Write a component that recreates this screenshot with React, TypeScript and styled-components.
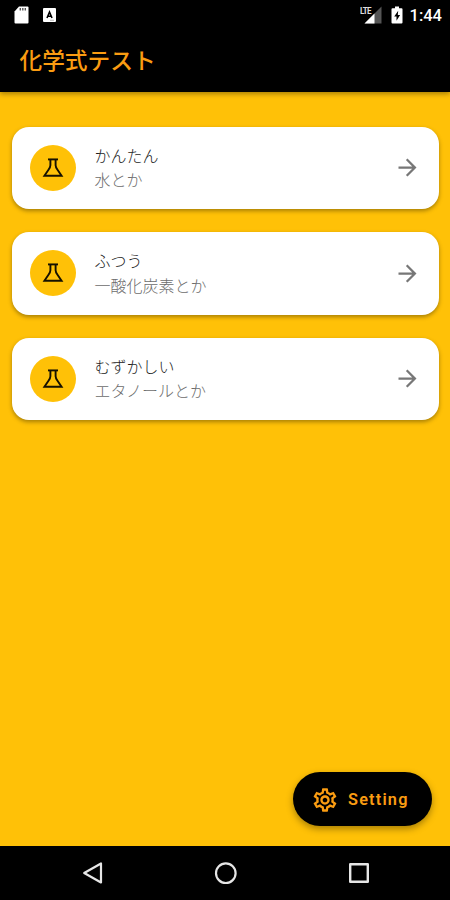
import styled, { createGlobalStyle } from 'styled-components';
import { MdArrowForward, MdOutlineSettings } from 'react-icons/md';

const AMBER = '#FFC107';
const ORANGE = '#FA9C12';

const levels = [
  { title: 'かんたん', subtitle: '水とか' },
  { title: 'ふつう', subtitle: '一酸化炭素とか' },
  { title: 'むずかしい', subtitle: 'エタノールとか' },
];

const GlobalStyle = createGlobalStyle`
  * {
    box-sizing: border-box;
  }
  body {
    margin: 0;
    background: ${AMBER};
    font-family: Roboto, 'Noto Sans CJK JP', sans-serif;
  }
  svg {
    display: block;
    flex-shrink: 0;
  }
`;

const Screen = styled.div`
  display: flex;
  flex-direction: column;
  width: 450px;
  height: 900px;
  overflow: hidden;
  background: ${AMBER};
`;

const Header = styled.header`
  z-index: 1;
  flex-shrink: 0;
  height: 92px;
  background: #000;
  box-shadow: 0 2px 5px rgba(0, 0, 0, 0.35);
`;

const StatusBar = styled.div`
  display: flex;
  align-items: center;
  justify-content: space-between;
  height: 29px;
  padding: 0 8px 0 14px;
`;

const StatusGroup = styled.div<{ $gap: number }>`
  display: flex;
  align-items: center;
  gap: ${(p) => p.$gap}px;
`;

const Clock = styled.span`
  margin-left: -2px;
  padding-top: 1px;
  color: #fff;
  font-size: 16.5px;
  font-weight: 500;
  line-height: 29px;
`;

const AppTitle = styled.h1`
  margin: 0;
  padding-left: 19.5px;
  color: ${ORANGE};
  font-size: 22.7px;
  font-weight: 500;
  line-height: 66px;
`;

const List = styled.main`
  display: flex;
  flex: 1;
  flex-direction: column;
  gap: 23px;
  padding: 34.5px 11px 0 11.5px;
`;

const Card = styled.div`
  display: flex;
  align-items: center;
  height: 82.5px;
  padding: 0 18.5px;
  border-radius: 17px;
  background: #fff;
  box-shadow: 0 2px 4px rgba(0, 0, 0, 0.35);
`;

const Avatar = styled.div`
  display: flex;
  align-items: center;
  justify-content: center;
  width: 46px;
  height: 46px;
  border-radius: 50%;
  background: ${AMBER};
`;

const CardText = styled.div`
  flex: 1;
  margin-left: 18.5px;
  padding-top: 2.5px;
  font-size: 16px;
  font-weight: 300;
  line-height: 24.5px;
`;

const CardTitle = styled.div`
  color: #1c1c1c;
`;

const CardSubtitle = styled.div`
  color: #6c6c6c;
`;

const Footer = styled.div`
  display: flex;
  justify-content: flex-end;
  padding: 0 18px 20px 0;
`;

const SettingButton = styled.button`
  display: flex;
  align-items: center;
  width: 139px;
  height: 54px;
  padding: 1px 0 0 18px;
  border: 0;
  border-radius: 27px;
  background: #000;
  box-shadow: 0 3px 7px rgba(0, 0, 0, 0.35);
  color: ${ORANGE};
  font-family: Roboto, sans-serif;
  font-size: 16.3px;
  font-weight: 600;
  letter-spacing: 1.2px;
  gap: 9px;
`;

const NavBar = styled.nav`
  display: flex;
  flex-shrink: 0;
  align-items: center;
  justify-content: space-between;
  height: 54px;
  padding: 0 77px 0 79px;
  background: #000;
`;

const SdCardIcon = () => (
  <svg width='15' height='18' viewBox='0 0 15 18'>
    <path d='M5 0.5h8.5a1 1 0 0 1 1 1v15a1 1 0 0 1-1 1h-12a1 1 0 0 1-1-1V5.5z' fill='#fff' />
    <path d='M6.3 2v2.6M8.8 2v2.6M11.3 2v2.6' stroke='#555' strokeWidth='1.4' />
  </svg>
);

const InputIcon = () => (
  <svg width='13' height='14' viewBox='0 0 13 14'>
    <rect width='13' height='14' rx='1' fill='#fff' />
    <path d='M4 10L6.5 4 9 10M4.8 8.3h3.4' stroke='#000' strokeWidth='1.6' fill='none' />
    <path d='M7 12.3h4' stroke='#bbb' strokeWidth='1' />
  </svg>
);

const SignalLabel = styled.span`
  position: absolute;
  top: 0;
  left: 0;
  color: #ddd;
  font-family: Roboto, sans-serif;
  font-size: 9.5px;
  font-weight: 700;
  line-height: 9px;
  letter-spacing: -0.8px;
  transform: scaleX(0.85);
  transform-origin: left;
`;

const Signal = styled.div`
  position: relative;
  width: 22px;
  height: 18px;
`;

const SignalIcon = () => (
  <Signal>
    <svg width='22' height='18' viewBox='0 0 22 18'>
      <path d='M4.5 17.5L21.5 0.5V17.5z' fill='#555' />
      <path d='M4.5 17.5L14.5 7.5V17.5z' fill='#fff' />
    </svg>
    <SignalLabel>LTE</SignalLabel>
  </Signal>
);

const BatteryIcon = () => (
  <svg width='12' height='18' viewBox='0 0 12 18'>
    <path d='M4 0.5h4v1.7h2.5a1 1 0 0 1 1 1v13.3a1 1 0 0 1-1 1h-9a1 1 0 0 1-1-1V3.2a1 1 0 0 1 1-1H4z' fill='#fff' />
    <path d='M7.2 4.8L3.2 10.6h2.3v4.2l3.6-5.9H6.8z' fill='#000' />
  </svg>
);

const FlaskIcon = () => (
  <svg width='22' height='20' viewBox='0 0 22 20' fill='none' stroke='#161100' strokeWidth='1.9'>
    <path d='M6 1.4h10' />
    <path d='M8.4 1.6v5.6c0 1.6-.8 3-1.9 4.6L2.4 17.8h17.2l-4.1-6c-1.1-1.6-1.9-3-1.9-4.6V1.6' />
  </svg>
);

const App = () => (
  <>
    <GlobalStyle />
    <Screen>
      <Header>
        <StatusBar>
          <StatusGroup $gap={14}>
            <SdCardIcon />
            <InputIcon />
          </StatusGroup>
          <StatusGroup $gap={9}>
            <SignalIcon />
            <BatteryIcon />
            <Clock>1:44</Clock>
          </StatusGroup>
        </StatusBar>
        <AppTitle>化学式テスト</AppTitle>
      </Header>
      <List>
        {levels.map((level) => (
          <Card key={level.title}>
            <Avatar>
              <FlaskIcon />
            </Avatar>
            <CardText lang='ja'>
              <CardTitle>{level.title}</CardTitle>
              <CardSubtitle>{level.subtitle}</CardSubtitle>
            </CardText>
            <MdArrowForward size={27} color='#777' />
          </Card>
        ))}
      </List>
      <Footer>
        <SettingButton>
          <MdOutlineSettings size={28} />
          Setting
        </SettingButton>
      </Footer>
      <NavBar>
        <svg width='28' height='28' viewBox='0 0 28 28' fill='none' stroke='#e6e6e6' strokeWidth='2.2' strokeLinejoin='round'>
          <path d='M22 4.5v19L5.2 14z' />
        </svg>
        <svg width='28' height='28' viewBox='0 0 28 28' fill='none' stroke='#e6e6e6' strokeWidth='2.2'>
          <circle cx='13.8' cy='14.2' r='9.8' />
        </svg>
        <svg width='28' height='28' viewBox='0 0 28 28' fill='none' stroke='#e6e6e6' strokeWidth='2.4' strokeLinejoin='round'>
          <rect x='5.2' y='5.2' width='17.6' height='17.6' />
        </svg>
      </NavBar>
    </Screen>
  </>
);

export default App;
